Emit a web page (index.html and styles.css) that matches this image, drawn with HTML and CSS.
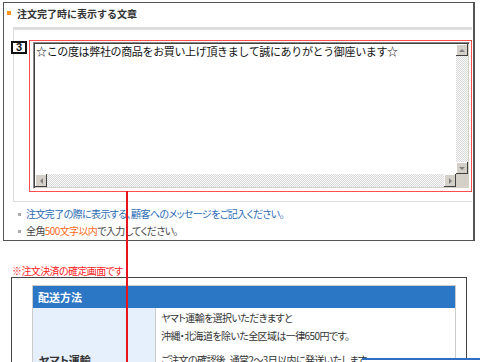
FILE: index.html
```html
<!DOCTYPE html>
<html lang="ja">
<head>
  <meta charset="UTF-8">
  <meta name="viewport" content="width=device-width, initial-scale=1.0">
  <title>注文完了時に表示する文章</title>
  <link rel="stylesheet" href="styles.css">
</head>
<body>
  <div class="page">
    <section class="panel">
      <h3 class="panel-title">注文完了時に表示する文章</h3>
      <div class="panel-body">
        <div class="mark-box">
          <div class="memo">
            <div class="memo-text">☆この度は弊社の商品をお買い上げ頂きまして誠にありがとう御座います☆</div>
            <div class="vscroll">
              <span class="sbtn"><i class="arr up"></i></span>
              <span class="track"></span>
              <span class="sbtn"><i class="arr down"></i></span>
            </div>
            <div class="hscroll">
              <span class="sbtn"><i class="arr left"></i></span>
              <span class="track"></span>
              <span class="sbtn"><i class="arr right"></i></span>
            </div>
            <div class="corner"></div>
          </div>
        </div>
      </div>
      <ul class="notes">
        <li class="blue">注文完了の際に表示する、顧客へのメッセージをご記入ください。</li>
        <li>全角<em>500文字以内</em>で入力してください。</li>
      </ul>
    </section>

    <p class="caption">※注文決済の確定画面です</p>

    <div class="preview">
      <table class="ship">
        <tr><th colspan="2">配送方法</th></tr>
        <tr>
          <td class="label">ヤマト運輸</td>
          <td class="desc">
            <p>ヤマト運輸を選択いただきますと<br>沖縄・北海道を除いた全区域は一律650円です。</p>
            <p>ご注文の確認後、通常2〜3日以内に発送いたします。</p>
          </td>
        </tr>
      </table>
    </div>

    <!-- annotation marks -->
    <span class="badge">3</span>
    <span class="pointer"></span>
    <div class="popup"></div>
  </div>
</body>
</html>
```

FILE: styles.css
```css
body { margin:0; background:#fff; color:#333; font-family:"Noto Sans CJK JP", "Noto Sans", sans-serif; }
.page { position:relative; width:480px; height:362px; overflow:hidden; padding-top:2px; box-sizing:border-box; }

.panel { margin-left:3px; width:472px; height:239px; box-sizing:border-box; border:1px solid #555; border-right-width:2px; }
.panel-title { margin:0; height:24px; display:flex; align-items:center; gap:6px; padding-left:3px; padding-bottom:4px; box-sizing:border-box; font-size:10px; font-weight:bold; color:#333; }
.panel-title::before { content:""; width:4px; height:4px; background:#f7941d; }

.panel-body { margin:0 1px 0 9px; border-top:3px solid #ddd; border-left:1px solid #ddd; border-bottom:1px solid #ddd; padding:10px 0 9px 15px; }
.mark-box { border:1px solid #ff4d4d; padding:1px 1px 2px 3px; }

.memo { width:437px; height:147px; box-sizing:border-box; border:1px solid; border-color:#888 #fff #fff #888; box-shadow:inset 1px 1px 0 #404040, inset -1px -1px 0 #d4d0c8; padding:1px; display:grid; grid-template-columns:1fr 12px; grid-template-rows:1fr 13px; }
.memo-text { padding:1px 1px; font-size:11px; letter-spacing:-0.35px; line-height:13px; color:#111; white-space:nowrap; overflow:hidden; }
.vscroll { display:flex; flex-direction:column; }
.hscroll { display:flex; }
.track { flex:1; background:repeating-conic-gradient(#fafafa 0 25%, #d8d8d8 0 50%) 0 0/2px 2px; }
.sbtn { width:12px; height:12px; flex:none; background:#d4d0c8; box-shadow:inset -1px -1px 0 #404040, inset 1px 1px 0 #fff; display:flex; align-items:center; justify-content:center; }
.hscroll .sbtn { height:13px; }
.corner { background:#d4d0c8; }
.arr { width:0; height:0; border:3px solid transparent; }
.arr.up { border-bottom-color:#808080; border-top-width:0; }
.arr.down { border-top-color:#808080; border-bottom-width:0; }
.arr.left { border-right-color:#808080; border-left-width:0; }
.arr.right { border-left-color:#808080; border-right-width:0; }

.notes { list-style:none; margin:0; padding:3px 0 0 14px; font-size:10px; line-height:17px; letter-spacing:-0.6px; font-feature-settings:"palt"; }
.notes li { color:#444; }
.notes li::before { content:""; display:inline-block; vertical-align:middle; width:3px; height:3px; margin:0 5px 2px 0; background:#aaa; }
.notes .blue { color:#2a6bb5; }
.notes em { font-style:normal; color:#ff6a1a; }

.caption { margin:23px 0 0 12px; font-size:10px; line-height:13px; letter-spacing:-0.6px; color:#f22; font-feature-settings:"palt"; }

.preview { margin:0 0 0 11px; width:456px; height:120px; box-sizing:border-box; border:1px solid #444; border-bottom:0; padding:7px 0 0 20px; }
.ship { width:424px; border-collapse:collapse; border:1px solid #ccc; font-size:10px; letter-spacing:-0.6px; font-feature-settings:"palt"; }
.ship th { height:22px; padding:0 0 0 5px; background:#2b77c5; color:#fff; text-align:left; font-size:11px; font-weight:bold; letter-spacing:0; }
.ship td { padding:0; vertical-align:middle; }
.ship .label { width:123px; height:104px; background:#e6f0fd; border-right:1px solid #ccc; padding-left:6px; box-sizing:border-box; font-weight:bold; font-size:11px; letter-spacing:0; }
.ship .desc { vertical-align:top; padding:1px 5px; color:#333; line-height:18px; }
.ship p { margin:0 0 6px; }

.badge { position:absolute; left:11px; top:41px; width:16px; height:13px; box-sizing:border-box; border:2px solid #111; background:#fff; font-size:11px; font-weight:bold; line-height:9px; text-align:center; color:#111; font-family:"Liberation Sans", sans-serif; }
.pointer { position:absolute; left:126px; top:191px; width:2px; height:171px; background:#e8141b; }
.popup { position:absolute; left:362px; top:358px; width:130px; height:10px; background:#fff; border-top:2px solid #2f6fc2; }
```
